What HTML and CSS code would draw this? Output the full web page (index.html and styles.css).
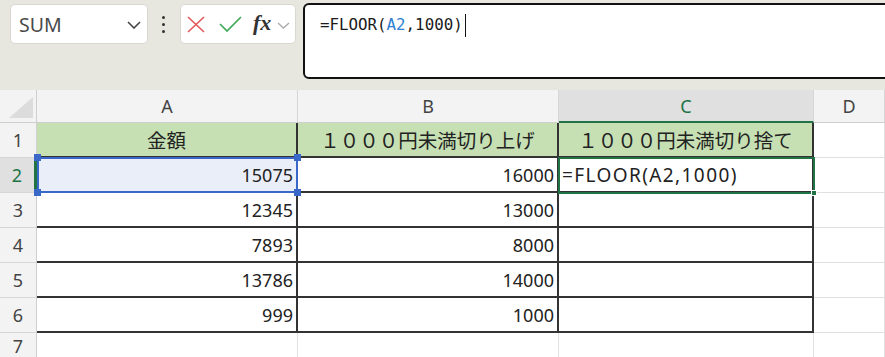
FILE: index.html
```html
<!DOCTYPE html>
<html lang="ja">
<head>
<meta charset="utf-8">
<title>FLOOR</title>
<link rel="stylesheet" href="styles.css">
</head>
<body>
<div class="toolbar">
  <div class="namebox">
    <span class="name">SUM</span>
    <svg class="chev" width="14" height="8" viewBox="0 0 14 8"><path d="M1 1 L7 7 L13 1" fill="none" stroke="#444" stroke-width="1.6"/></svg>
  </div>
  <div class="dots"><i></i><i></i><i></i></div>
  <div class="fxbtns">
    <svg class="ico" width="18" height="17" viewBox="0 0 18 17"><path d="M1 1 L17 16 M17 1 L1 16" fill="none" stroke="#e25a5c" stroke-width="1.7"/></svg>
    <svg class="ico chk" width="23" height="16" viewBox="0 0 23 16"><path d="M1 8 L8 15 L22 1" fill="none" stroke="#3fa95a" stroke-width="1.7"/></svg>
    <span class="fx">fx</span>
    <svg class="chev2" width="13" height="7" viewBox="0 0 13 7"><path d="M1 1 L6.5 6 L12 1" fill="none" stroke="#aaa" stroke-width="1.3"/></svg>
  </div>
  <div class="formula"><span>=FLOOR(</span><span class="ref">A2</span><span>,1000)</span><span class="caret"></span></div>
</div>
<div class="sheet">
  <div class="c corner"><span class="tri"></span></div>
  <div class="c ch">A</div>
  <div class="c ch">B</div>
  <div class="c ch ch-sel">C</div>
  <div class="c ch">D</div>

  <div class="c rh">1</div>
  <div class="c d hdr jp">金額</div>
  <div class="c d hdr jp">１０００円未満切り上げ</div>
  <div class="c d hdr jp">１０００円未満切り捨て</div>
  <div class="c g"></div>

  <div class="c rh rh-sel">2</div>
  <div class="c d num a2">15075</div>
  <div class="c d num">16000</div>
  <div class="c d txt">=FLOOR(A2,1000)</div>
  <div class="c g"></div>

  <div class="c rh">3</div>
  <div class="c d num">12345</div>
  <div class="c d num">13000</div>
  <div class="c d"></div>
  <div class="c g"></div>

  <div class="c rh">4</div>
  <div class="c d num">7893</div>
  <div class="c d num">8000</div>
  <div class="c d"></div>
  <div class="c g"></div>

  <div class="c rh">5</div>
  <div class="c d num">13786</div>
  <div class="c d num">14000</div>
  <div class="c d"></div>
  <div class="c g"></div>

  <div class="c rh">6</div>
  <div class="c d num">999</div>
  <div class="c d num">1000</div>
  <div class="c d"></div>
  <div class="c g"></div>

  <div class="c rh rh-last">7</div>
  <div class="c g"></div>
  <div class="c g"></div>
  <div class="c g"></div>
  <div class="c g"></div>

  <div class="ref-sel">
    <span class="h h-tl"></span><span class="h h-tr"></span><span class="h h-bl"></span><span class="h h-br"></span>
  </div>
  <div class="act-sel"><span class="fill"></span></div>
</div>
</body>
</html>
```
FILE: styles.css
```css
* { box-sizing: border-box; }
html, body { margin: 0; padding: 0; }
body {
  width: 885px;
  height: 357px;
  overflow: hidden;
  background: #e8e7df;
  font-family: "Noto Sans", "Noto Sans CJK JP", sans-serif;
}

.toolbar {
  height: 90px;
  display: flex;
  align-items: flex-start;
  padding-left: 10px;
}
.namebox {
  margin-top: 4px;
  width: 138px;
  height: 40px;
  background: #fff;
  border: 1px solid #d9d8d0;
  border-radius: 5px;
  display: flex;
  align-items: center;
  justify-content: space-between;
  padding: 0 6px 0 8px;
}
.name {
  font-family: "Noto Sans", sans-serif;
  font-size: 19.5px;
  color: #4a4a4a;
  padding-top: 1px;
}
.chev { margin-top: 2px; }
.dots {
  margin-left: 14px;
  margin-top: 16px;
  display: flex;
  flex-direction: column;
  gap: 4px;
}
.dots i {
  display: block;
  width: 3px;
  height: 3px;
  border-radius: 50%;
  background: #333;
}
.fxbtns {
  margin-left: 15px;
  margin-top: 4px;
  width: 116px;
  height: 40px;
  background: #fff;
  border: 1px solid #d9d8d0;
  border-radius: 5px;
  display: flex;
  align-items: center;
  padding-left: 6px;
}
.ico { flex: none; }
.chk { margin-left: 14px; }
.fx {
  margin-left: 11px;
  font-family: "Liberation Serif", "DejaVu Serif", serif;
  font-style: italic;
  font-weight: bold;
  font-size: 22px;
  color: #333;
  line-height: 1;
  margin-top: -2px;
}
.chev2 { margin-left: 6px; margin-top: 2px; }
.formula {
  margin-left: 7px;
  margin-top: 3px;
  height: 76px;
  flex: 1;
  margin-right: -12px;
  background: #fff;
  border: 2px solid #111;
  border-radius: 6px;
  padding: 9px 0 0 15px;
  font-family: "DejaVu Sans Mono", "Liberation Mono", monospace;
  font-size: 15.8px;
  color: #1a1a1a;
  display: flex;
  align-items: flex-start;
  line-height: 22px;
}
.formula .ref { color: #2f7fd0; }
.caret {
  display: inline-block;
  width: 1px;
  height: 23px;
  background: #111;
  margin-left: 2px;
}

.sheet {
  position: relative;
  display: grid;
  grid-template-columns: 37px 261px 261px 255px 71px;
  grid-template-rows: 33px repeat(7, 35px);
  background: #fff;
  font-size: 18px;
  color: #222;
}
.c {
  border-right: 1px solid #e0e0e0;
  border-bottom: 1px solid #e0e0e0;
  display: flex;
  align-items: center;
  overflow: hidden;
  white-space: nowrap;
}
.corner {
  background: #f3f3f3;
  border-right: 1px solid #cfcfcf;
  border-bottom: 1px solid #cfcfcf;
  position: relative;
}
.tri {
  position: absolute;
  left: 9px;
  top: 7px;
  width: 24px;
  height: 21px;
  background: #dcdcdc;
  clip-path: polygon(100% 0, 100% 100%, 0 100%);
}
.ch {
  background: #f3f3f3;
  justify-content: center;
  color: #444;
  font-size: 18px;
  border-right: 1px solid #d6d6d6;
  border-bottom: 1px solid #cfcfcf;
}
.ch-sel {
  background: #e0e0e0;
  color: #217346;
  border-bottom: 2px solid #217346;
}
.rh {
  background: #f3f3f3;
  justify-content: center;
  color: #444;
  font-size: 18px;
  border-right: 1px solid #cfcfcf;
  border-bottom: 1px solid #d6d6d6;
}
.rh-last { align-items: flex-start; padding-top: 2px; line-height: 22px; }
.rh-sel {
  background: #e0e0e0;
  color: #217346;
  border-right: 3px solid #217346;
}
.d {
  border-right: 2px solid #333;
  border-bottom: 2px solid #333;
}
.hdr {
  background: #c6e0b4;
  justify-content: center;
}
.jp {
  font-family: "Noto Sans CJK JP", "Noto Sans", sans-serif;
  font-size: 19.5px;
  color: #222;
}
.num {
  justify-content: flex-end;
  padding-right: 3px;
}
.txt {
  padding-left: 3px;
  font-size: 19px;
  letter-spacing: 1.4px;
}
.a2 { background: #e9eef8; }
.g { border-color: #e0e0e0; }

.ref-sel {
  position: absolute;
  left: 37px;
  top: 67px;
  width: 261px;
  height: 36px;
  border: 2px solid #3a68c8;
}
.h {
  position: absolute;
  width: 7px;
  height: 7px;
  background: #3a68c8;
}
.h-tl { left: -5px; top: -5px; }
.h-tr { right: -5px; top: -5px; }
.h-bl { left: -5px; bottom: -5px; }
.h-br { right: -5px; bottom: -5px; }
.act-sel {
  position: absolute;
  left: 558px;
  top: 67px;
  width: 257px;
  height: 37px;
  border: 2px solid #217346;
}
.fill {
  position: absolute;
  right: -4px;
  bottom: -4px;
  width: 6px;
  height: 6px;
  background: #217346;
  border: 1px solid #fff;
}
```
